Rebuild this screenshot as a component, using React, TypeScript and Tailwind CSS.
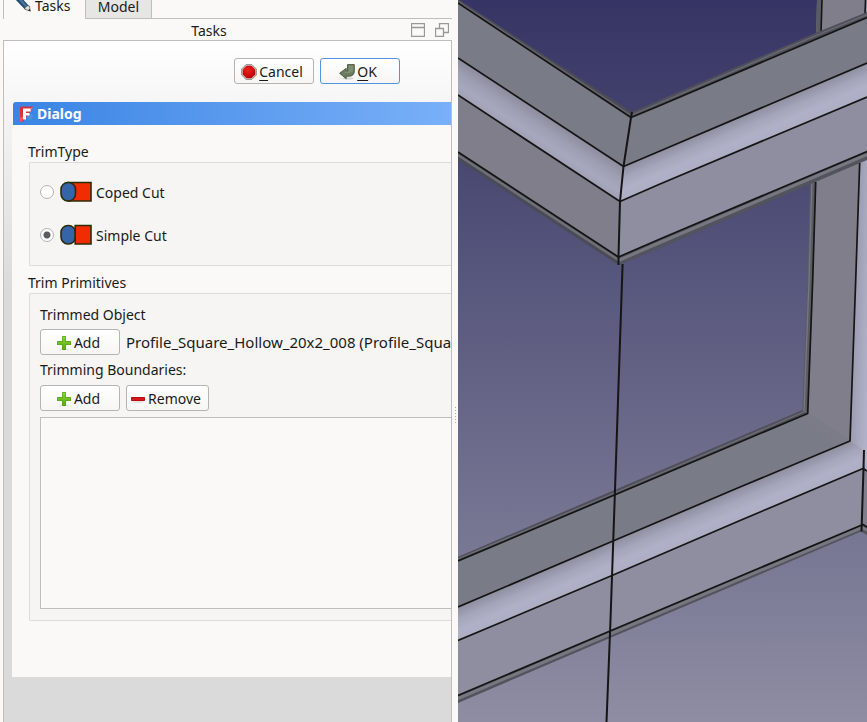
import { useState } from "react";
import type { ReactNode } from "react";

const buttonBase =
  "flex h-[26px] shrink-0 cursor-default items-center justify-center rounded-[3px] border bg-gradient-to-b from-white to-[#f7f6f5] pt-px pr-1";

function PencilIcon() {
  return (
    <svg className="h-4 w-4 shrink-0" viewBox="0 0 16 16" aria-hidden="true">
      <path d="M0 1 5-2l9 10-.5 4.500L9.500 11z" fill="#204a70" />
      <path d="M2 0 4-1.500l8.500 9.500-2 1.500z" fill="#47719f" />
      <path d="m9.500 11 1-1.800 2-1.400L14.500 8l.8 5.200z" fill="#e5e1d4" stroke="#3b4043" strokeWidth=".6" />
      <path d="m13 12.500 1.800-1.700.6 2.500z" fill="#222" />
    </svg>
  );
}

function StopIcon() {
  return (
    <svg className="h-4 w-4 shrink-0" viewBox="0 0 16 16" aria-hidden="true">
      <defs>
        <radialGradient id="stop-red" cx=".4" cy=".3" r=".8">
          <stop offset="0" stopColor="#ef2020" />
          <stop offset="1" stopColor="#b80000" />
        </radialGradient>
      </defs>
      <path d="M5 .7h6L15.300 5v6L11 15.300H5L.7 11V5z" fill="#e9e9e7" stroke="#858783" />
      <path d="M5.500 2h5L14 5.500v5L10.500 14h-5L2 10.500v-5z" fill="url(#stop-red)" stroke="#b00000" strokeWidth=".6" />
    </svg>
  );
}

function ReturnIcon() {
  return (
    <svg className="h-4 w-4 shrink-0" viewBox="0 0 16 16" aria-hidden="true">
      <ellipse cx="9" cy="14.500" rx="6" ry="1.200" fill="#d3d6d0" />
      <path
        d="M8.500 .6h6.800v6.600c0 3-2 5-5 5H7.200v2.500L.6 9.300l6.600-5v2.500h1.300z"
        fill="#6a7c5d"
        stroke="#47533f"
        strokeWidth=".9"
      />
      <path d="M9.500 1.600h4.800v5c0 1-2 2.400-4 2.400H5L6.500 7.800h3z" fill="#8b9d7d" opacity=".6" />
    </svg>
  );
}

function PlusIcon() {
  return (
    <svg className="h-4 w-4 shrink-0" viewBox="0 0 16 16" aria-hidden="true">
      <defs>
        <linearGradient id="plus-green" x2="0" y2="1">
          <stop offset="0" stopColor="#8ad83a" />
          <stop offset="1" stopColor="#55a80e" />
        </linearGradient>
      </defs>
      <ellipse cx="8" cy="14.500" rx="5" ry="1" fill="#e6e6e4" />
      <path d="M6 1h4v5h5v4h-5v5H6v-5H1V6h5z" fill="url(#plus-green)" />
      <path d="M6.500 1.500h3v5h5v3h-5v5h-3v-5h-5v-3h5z" fill="none" stroke="#55a018" opacity=".6" />
    </svg>
  );
}

function MinusIcon() {
  return (
    <svg className="h-4 w-4 shrink-0" viewBox="0 0 16 16" aria-hidden="true">
      <ellipse cx="8" cy="11" rx="6" ry="1" fill="#e2e1df" />
      <path d="M1.500 6.500h13v3h-13z" fill="#d8181c" stroke="#b80c10" />
    </svg>
  );
}

function FreeCadIcon() {
  return (
    <svg className="h-4 w-4 shrink-0" viewBox="0 0 16 16" aria-hidden="true">
      <path d="M1 2q0-1.500 1.500-1.500H14L10 8 4 15.500H1z" fill="#d8323c" />
      <path d="m11 3 3-2.500-3 6z" fill="#ff6b70" />
      <path d="m1 11 4-1-2 5.500H1z" fill="#ff5058" />
      <path d="m8 11 2-3h3l1 2-1 3-3 1z" fill="#4894dc" />
      <path d="M4 2.500h7.500v3H7V7h3.500v2.500H7v4H4z" fill="white" />
    </svg>
  );
}

function CopedCutIcon() {
  return (
    <svg className="h-[22px] w-8 shrink-0" viewBox="0 0 32 22" aria-hidden="true">
      <path d="M8 1.500h23v18.500H8z" fill="#f02c00" stroke="#2d2c08" strokeWidth="1.600" />
      <rect x="1" y="1.500" width="14.500" height="18.500" rx="7" fill="#3465a8" stroke="#2d2c08" strokeWidth="1.600" />
    </svg>
  );
}

function SimpleCutIcon() {
  return (
    <svg className="h-[22px] w-8 shrink-0" viewBox="0 0 32 22" aria-hidden="true">
      <rect x="1" y="1.500" width="14.500" height="18.500" rx="7" fill="#3465a8" stroke="#2d2c08" strokeWidth="1.600" />
      <path d="M15.200 1.500H31v18.500H15.200z" fill="#f02c00" stroke="#2d2c08" strokeWidth="1.600" />
    </svg>
  );
}

function PushButton({ icon, className, children }: { icon: ReactNode; className: string; children: ReactNode }) {
  return (
    <button type="button" className={`${buttonBase} ${className}`}>
      {icon}
      <span>{children}</span>
    </button>
  );
}

function CutOption({
  label,
  icon,
  checked,
  onChange,
}: {
  label: string;
  icon: ReactNode;
  checked: boolean;
  onChange: () => void;
}) {
  return (
    <label className="flex h-[22px] items-center">
      <input
        type="radio"
        name="trim-type"
        checked={checked}
        onChange={onChange}
        className="mr-1.5 h-3.5 w-3.5 shrink-0 appearance-none rounded-full border border-[#b4b3b1] bg-white checked:bg-[radial-gradient(circle,#5b5e60_3px,white_4px)]"
      />
      {icon}
      <span className="ml-1 pt-0.5">{label}</span>
    </label>
  );
}

function TaskDock() {
  const [cut, setCut] = useState("simple");
  return (
    <aside className="flex w-[452px] shrink-0 flex-col overflow-hidden pl-[3px]">
      <div role="tablist" className="flex h-[19px] shrink-0 items-end">
        <button
          type="button"
          role="tab"
          aria-selected="true"
          className="flex h-6 w-[82px] shrink-0 items-center border-l border-[#bfbebc] pb-0.5 pl-[11px]"
        >
          <PencilIcon />
          <span className="ml-1">Tasks</span>
        </button>
        <button
          type="button"
          role="tab"
          aria-selected="false"
          className="flex h-6 w-[67px] shrink-0 items-center justify-center border border-[#bfbebc] bg-[#e6e6e4]"
        >
          Model
        </button>
        <div className="flex-1 border-b border-[#bfbebc]" />
      </div>

      <div className="flex h-[21px] shrink-0 items-center pr-[3px]">
        <h1 className="flex-1 pt-0.5 pl-1 text-center">Tasks</h1>
        <div className="flex gap-2.5">
          <button type="button" aria-label="Collapse panel">
            <svg className="h-3.5 w-3.5" viewBox="0 0 14 14" fill="none" stroke="#999896">
              <path d="M.5 .5h13v13H.5zM.5 4.500h13" strokeWidth="1.300" />
            </svg>
          </button>
          <button type="button" aria-label="Float panel">
            <svg className="h-3.5 w-3.5" viewBox="0 0 14 14" fill="none" stroke="#999896" strokeWidth="1.300">
              <path d="M.5 5.500h8v8h-8zM4.500 5.500v-5h9v9h-5" />
            </svg>
          </button>
        </div>
      </div>

      <div className="flex-1 border border-b-0 border-[#bfbebc] bg-[#dadada] bg-[linear-gradient(to_bottom,white,#dadada_250px)] pl-2">
        <div className="flex justify-end gap-1.5 pt-[17px] pr-[51px] pb-[18px]">
          <PushButton className="w-20 gap-0.5 border-[#b5b4b2]" icon={<StopIcon />}>
            <span className="underline underline-offset-3">C</span>ancel
          </PushButton>
          <PushButton className="w-20 gap-0.5 border-[#5294e2] to-[#eef3f9]" icon={<ReturnIcon />}>
            <span className="underline underline-offset-3">O</span>K
          </PushButton>
        </div>

        <section className="overflow-hidden">
          <h2 className="ml-px flex h-[23px] items-center rounded-tl-[3px] bg-gradient-to-r from-[#3984e4] to-[#79b0f8] pl-1.5 font-bold text-white">
            <FreeCadIcon />
            <span className="ml-0.5">Dialog</span>
          </h2>
          <div className="bg-[#faf9f7] pt-4 pb-14 pl-4">
            <fieldset>
              <legend className="leading-[21px]">TrimType</legend>
              <div className="ml-px flex flex-col gap-[21px] rounded-l-[2px] border border-r-0 border-[#dddcda] bg-[#f6f5f4] pt-[18px] pb-[19px] pl-2.5">
                <CutOption
                  label="Coped Cut"
                  icon={<CopedCutIcon />}
                  checked={cut === "coped"}
                  onChange={() => setCut("coped")}
                />
                <CutOption
                  label="Simple Cut"
                  icon={<SimpleCutIcon />}
                  checked={cut === "simple"}
                  onChange={() => setCut("simple")}
                />
              </div>
            </fieldset>

            <fieldset className="mt-1.5 min-w-0">
              <legend className="leading-[21px]">Trim Primitives</legend>
              <div className="ml-px rounded-l-[2px] border border-r-0 border-[#dddcda] bg-[#f6f5f4] pt-2.5 pb-[11px] pl-2.5">
                <p className="mb-1 leading-[21px]">Trimmed Object</p>
                <div className="flex items-center gap-1.5">
                  <PushButton className="w-20 gap-0.5 border-[#b5b4b2]" icon={<PlusIcon />}>
                    Add
                  </PushButton>
                  <span className="overflow-hidden text-[15px] whitespace-nowrap">
                    Profile_Square_Hollow_20x2_008 (Profile_Square_Hollow_20x2_008)
                  </span>
                </div>
                <p id="boundaries-label" className="mt-1 mb-1 leading-[22px]">
                  Trimming Boundaries:
                </p>
                <div className="flex gap-1.5">
                  <PushButton className="w-20 gap-0.5 border-[#b5b4b2]" icon={<PlusIcon />}>
                    Add
                  </PushButton>
                  <PushButton className="w-[83px] gap-0.5 border-[#b5b4b2]" icon={<MinusIcon />}>
                    Remove
                  </PushButton>
                </div>
                <select
                  multiple
                  aria-labelledby="boundaries-label"
                  className="mt-1.5 block h-48 w-full appearance-none border border-r-0 border-[#bfbebc] bg-[#faf9f7]"
                />
              </div>
            </fieldset>
          </div>
        </section>
      </div>
    </aside>
  );
}

function Scene() {
  return (
    <svg
      className="block h-full w-full"
      viewBox="458 0 409 722"
      preserveAspectRatio="xMidYMid slice"
      role="img"
      aria-label="3D view of the aluminium frame"
    >
      <defs>
        <linearGradient id="backdrop" x2="0" y2="1">
          <stop offset="0" stopColor="#353464" />
          <stop offset="1" stopColor="#8e8da3" />
        </linearGradient>
        <linearGradient id="glow-left" gradientUnits="userSpaceOnUse" x1="458" y1="58" x2="441" y2="84">
          <stop offset="0" stopColor="#8c8c9d" />
          <stop offset=".4" stopColor="#9f9fb4" />
          <stop offset=".75" stopColor="#a7a7bd" />
          <stop offset="1" stopColor="#a1a1b6" />
        </linearGradient>
        <linearGradient id="glow-upper" gradientUnits="userSpaceOnUse" x1="660" y1="151" x2="671.900" y2="179">
          <stop offset="0" stopColor="#8f8fa1" />
          <stop offset=".35" stopColor="#a4a4ba" />
          <stop offset=".7" stopColor="#b0b0c8" />
          <stop offset="1" stopColor="#adadc4" />
        </linearGradient>
        <linearGradient id="glow-lower" gradientUnits="userSpaceOnUse" x1="613" y1="541.500" x2="624.900" y2="569.500">
          <stop offset="0" stopColor="#8f8fa1" />
          <stop offset=".35" stopColor="#a4a4ba" />
          <stop offset=".7" stopColor="#b0b0c8" />
          <stop offset="1" stopColor="#adadc4" />
        </linearGradient>
        <linearGradient id="glow-post" gradientUnits="userSpaceOnUse" x1="855" y1="300" x2="870" y2="300.500">
          <stop offset="0" stopColor="#9c9cb1" />
          <stop offset="1" stopColor="#b1b1c9" />
        </linearGradient>
        <linearGradient id="corner-shade" gradientUnits="userSpaceOnUse" x1="835" y1="415" x2="822" y2="437">
          <stop offset="0" stopColor="#807e8a" />
          <stop offset="1" stopColor="#797b86" />
        </linearGradient>
      </defs>

      <rect x="458" width="409" height="722" fill="url(#backdrop)" />

      {/* rear post above the upper rail */}
      <path d="M817 0h50v40h-51z" fill="#807e8a" />
      <path d="M817 0h5l-1 36h-5z" fill="#5b5b64" />
      <path d="M866 0h1v20h-1z" fill="#9898ac" />
      <path d="M822 0l-1 33M865.500 0l-.5 14" fill="none" stroke="#151515" strokeWidth="1.600" />

      {/* right post between the rails */}
      <path d="M859.700 160H867v312l-17-31z" fill="url(#glow-post)" />
      <path d="M815.700 180 860 161l-4.300 119L850 441l-42-27.500 4.700-133z" fill="#807e8a" />
      <path d="M810 181h6l-3.300 99-5 133.500-5.400-3.500 5-130z" fill="#5b5b64" />
      <path d="m812 181-3 99-5 131" fill="none" stroke="#777782" strokeWidth="1.300" />

      {/* lower rail */}
      <path d="m458 556.700 156.500-66.700L802.300 410l5.400 3.500L614.500 495 458 561z" fill="#50505a" />
      <path d="m458 559 156.500-66L806 411" fill="none" stroke="#6d6d78" strokeWidth="1.300" />
      <path d="m458 561 156.500-66 193.500-81.500L850 441l-110 46.500L613 541l-155 66z" fill="#797b86" />
      <path d="m808 413.500 42 27.500-46 8z" fill="url(#corner-shade)" />
      <path d="m458 607 155-66 237-100 14 9v18.500L740 520.500l-128 55L458 640.500z" fill="url(#glow-lower)" />
      <path d="m850 441 14 9h3v-20l-12-10z" fill="url(#glow-post)" />
      <path d="m458 640.500 154-65L863 468.500l4 2.500v56l-4-2.500L610 631 458 695.500z" fill="#8e8ea0" />
      <path d="m863.500 469 3.500 2v56l-5-3z" fill="#807e8a" />
      <path d="M458 695.500 610 631l252-106.500 5 2.500v8l-6-3.500L610 638 458 703z" fill="#53535d" />
      <path d="M458 698.500 610 634 862 527.500l5 3" fill="none" stroke="#777782" strokeWidth="3" />

      {/* upper rail, left arm */}
      <path d="M458-1 632 112l-1 5.500L458 3z" fill="#4b4b56" />
      <path d="m458 1.500 173 114" fill="none" stroke="#64646f" strokeWidth="1.500" />
      <path d="m458 3 173 114.500-7.500 49L458 58z" fill="#797b86" />
      <path d="m458 58 165.500 108.500L620 201.500 458 95z" fill="url(#glow-left)" />
      <path d="m458 95 162 106.500-1.500 55.500L458 152z" fill="#807e8a" />
      <path d="m458 152 160.500 105v8L458 160z" fill="#4b4b55" />
      <path d="m458 155 160.500 105" fill="none" stroke="#6f6f7a" strokeWidth="2.500" />

      {/* upper rail, right arm */}
      <path d="M632 112 816 32.700 867 12v6L631 117.500z" fill="#50505a" />
      <path d="m632 115 184-79.500L867 14.500" fill="none" stroke="#6b6b76" strokeWidth="1.300" />
      <path d="M631 117.500 867 17.500V63L660 151l-36.500 15.500z" fill="#797b86" />
      <path d="M623.500 166.500 660 151l207-88v34l-207 87-40 17.500z" fill="url(#glow-upper)" />
      <path d="m620 201.500 40-17.500 207-87v54.500L660 239l-41.500 18z" fill="#8e8ea0" />
      <path d="M618.500 257 660 239l207-87.500v8.500l-207 88-41 17z" fill="#53535d" />
      <path d="M618.500 260.500 660 242.500l207-88" fill="none" stroke="#777782" strokeWidth="3" />

      {/* visible edges */}
      <g fill="none" stroke="#151515" strokeWidth="1.700" strokeLinejoin="round">
        <path d="m458 3 173 114.500L660 105.500l207-88" />
        <path d="m458 58 165.500 108.500L660 151l207-88" />
        <path d="M458 95 620 201.500 660 184l207-87" />
        <path d="m458 152 160.500 105L660 239l207-87.500" />
        <path d="m632 112-1 5.500-7.500 49L620 201.500 618.500 257v8" strokeWidth="2" />
        <path d="M815.700 182l-3 98-5 133.500L614.500 495 458 561" />
        <path d="m859.700 163-4 117L850 441l-110 46L613 541l-155 66" />
        <path d="m458 640.500 154-65L740 520.500l123-52 4 2.500" />
        <path d="M458 695.500 610 631l253-106.500 4 2.500" />
        <path d="m864 450-.5 18.500-2 63" strokeWidth="2" />
        <path d="M622.600 264 615 490l-4.500 130-4 102" strokeWidth="2" />
      </g>
    </svg>
  );
}

export default function App() {
  return (
    <main className="flex h-screen min-h-[680px] bg-[#faf9f7] font-['Noto_Sans','Open_Sans',sans-serif] text-[14px] leading-5 text-[#1a1a1a]">
      <TaskDock />
      <div
        role="separator"
        aria-orientation="vertical"
        className="flex w-1.5 shrink-0 flex-col items-center justify-center gap-0.5 pt-[108px]"
      >
        {[0, 1, 2, 3, 4, 5].map((dot) => (
          <span key={dot} className="h-px w-px bg-[#a9a8a6]" />
        ))}
      </div>
      <div className="min-w-0 flex-1">
        <Scene />
      </div>
    </main>
  );
}
